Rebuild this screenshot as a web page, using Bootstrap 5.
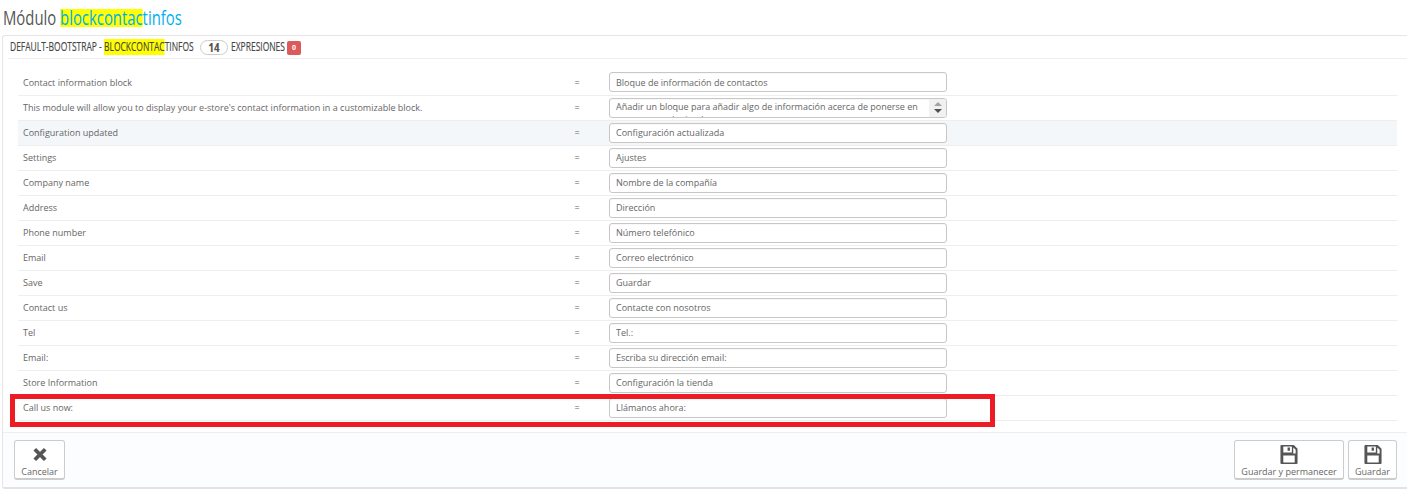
<!DOCTYPE html>
<html lang="es">
<head>
<meta charset="utf-8">
<title>Módulo blockcontactinfos</title>
<link href="https://cdn.jsdelivr.net/npm/bootstrap@5.3.0/dist/css/bootstrap.min.css" rel="stylesheet">
<style>
html,body{background:#fff;}
body{font-family:"Open Sans",sans-serif;font-size:9px;color:#666;overflow:hidden;}
.page-wrap{position:relative;height:497px;padding:0 0 0 2px;}
.mod-title{font-family:"Open Sans",sans-serif;font-size:20px;line-height:18px;color:#555;font-weight:400;margin:0;padding:9px 0 8px 1px;height:35px;white-space:nowrap;}
.squeeze-title{display:inline-block;transform:scaleX(.743);transform-origin:0 50%;}
.mod-title a{color:#00aff0;text-decoration:none;}
.hl{background:#ff0;display:inline-block;}
.tr-panel{border:1px solid #e6e6e6;border-right:0;border-bottom:2px solid #e3e3e5;border-radius:3px 0 0 3px;height:454px;display:flex;flex-direction:column;}
.tr-head{margin:0 0 0 5px;height:23px;border-bottom:1px solid #eee;font-family:"Open Sans",sans-serif;font-size:12px;line-height:16px;color:#444;text-transform:uppercase;display:flex;align-items:center;padding-left:2px;white-space:nowrap;}
.squeeze-head{display:inline-block;transform:scaleX(.706);transform-origin:0 50%;-webkit-text-stroke:.15px #444;}
.head-main{flex:none;width:183px;}
.head-exp{flex:none;width:55px;}
.count-pill{flex:none;border:1px solid #ccc;border-radius:10px;width:28px;height:15px;line-height:13px;text-align:center;font-weight:700;font-stretch:75%;font-size:12px;margin:0 3px 0 7px;background:#fff;color:#555;}
.zero-badge{flex:none;background:#dc5a5a;color:#fff;font-size:7px;font-weight:700;border-radius:2px;width:14px;height:14px;line-height:14px;text-align:center;margin:1px 0 0 1px;}
.tr-body{flex:1;padding:11px 10px 0 15px;}
.tr-table{table-layout:fixed;width:100%;border-collapse:collapse;}
.tr-table td{height:25px;padding:1px 5px 0;border-bottom:1px solid #eee;font-size:9px;color:#666;vertical-align:middle;}
.tr-table td.in-cell{padding-top:0;}
.tr-table tr.alt td{background:#f4f7fa;}
.c-src{width:532px;}
.c-eq{width:54px;padding-left:0!important;padding-right:0!important;text-align:center;}
.tr-in{display:block;width:338px;height:20px;border:1px solid #c7c7c7;border-radius:3px;background:#fff;padding:0 6px;font:9px/18px "Open Sans",sans-serif;color:#666;box-shadow:inset 0 1px 1px rgba(0,0,0,.03);outline:0;}
.ta-wrap{position:relative;width:338px;}
textarea.tr-in{resize:none;overflow:hidden;padding:1px 24px 0 6px;line-height:13px;}
.fake-sb{position:absolute;right:1px;top:1px;bottom:1px;width:17px;background:#f1f1f1;border-radius:0 2px 2px 0;display:flex;flex-direction:column;align-items:center;justify-content:center;gap:3px;}
.fake-sb i{display:block;width:0;height:0;border-left:4px solid transparent;border-right:4px solid transparent;}
.fake-sb i.up{border-bottom:4px solid #a3a3a3;}
.fake-sb i.down{border-top:4px solid #505050;}
.tr-foot{height:55px;background:#fcfdfe;border-top:1px solid #eee;display:flex;justify-content:space-between;padding:7px 10px 0 11px;margin-top:auto;}
.tool-btn{height:40px;background:#fff;border:1px solid #ccc;border-bottom-width:2px;border-radius:3px;font-size:9px;color:#666;padding:0;display:flex;flex-direction:column;align-items:center;line-height:12px;}
.tool-btn svg{display:block;margin-top:4px;margin-bottom:2px;}
.btn-cancel{width:51px;}
.btn-stay{width:110px;}
.btn-save{width:49px;}
.btn-row{display:flex;gap:4px;}
.red-mark{position:absolute;left:10px;top:394px;width:985px;height:33px;border:5px solid #ed1c24;pointer-events:none;}
</style>
</head>
<body>
<div class="page-wrap">
  <h1 class="mod-title"><span class="squeeze-title">Módulo <a href="#"><span class="hl">blockcontac</span>tinfos</a></span></h1>
  <div class="tr-panel">
    <div class="tr-head">
      <span class="head-main"><span class="squeeze-head">default-bootstrap - <span class="hl">blockcontac</span>tinfos</span></span>
      <span class="count-pill">14</span>
      <span class="head-exp"><span class="squeeze-head">expresiones</span></span>
      <span class="zero-badge">0</span>
    </div>
    <div class="tr-body">
      <table class="tr-table">
        <colgroup><col class="c-src"><col class="c-eq"><col></colgroup>
        <tbody>
          <tr><td>Contact information block</td><td class="c-eq">=</td><td class="in-cell"><input class="tr-in" value="Bloque de información de contactos"></td></tr>
          <tr><td>This module will allow you to display your e-store's contact information in a customizable block.</td><td class="c-eq">=</td><td class="in-cell"><div class="ta-wrap"><textarea class="tr-in">Añadir un bloque para añadir algo de información acerca de ponerse en contacto con la tienda.</textarea><div class="fake-sb"><i class="up"></i><i class="down"></i></div></div></td></tr>
          <tr class="alt"><td>Configuration updated</td><td class="c-eq">=</td><td class="in-cell"><input class="tr-in" value="Configuración actualizada"></td></tr>
          <tr><td>Settings</td><td class="c-eq">=</td><td class="in-cell"><input class="tr-in" value="Ajustes"></td></tr>
          <tr><td>Company name</td><td class="c-eq">=</td><td class="in-cell"><input class="tr-in" value="Nombre de la compañía"></td></tr>
          <tr><td>Address</td><td class="c-eq">=</td><td class="in-cell"><input class="tr-in" value="Dirección"></td></tr>
          <tr><td>Phone number</td><td class="c-eq">=</td><td class="in-cell"><input class="tr-in" value="Número telefónico"></td></tr>
          <tr><td>Email</td><td class="c-eq">=</td><td class="in-cell"><input class="tr-in" value="Correo electrónico"></td></tr>
          <tr><td>Save</td><td class="c-eq">=</td><td class="in-cell"><input class="tr-in" value="Guardar"></td></tr>
          <tr><td>Contact us</td><td class="c-eq">=</td><td class="in-cell"><input class="tr-in" value="Contacte con nosotros"></td></tr>
          <tr><td>Tel</td><td class="c-eq">=</td><td class="in-cell"><input class="tr-in" value="Tel.:"></td></tr>
          <tr><td>Email:</td><td class="c-eq">=</td><td class="in-cell"><input class="tr-in" value="Escriba su dirección email:"></td></tr>
          <tr><td>Store Information</td><td class="c-eq">=</td><td class="in-cell"><input class="tr-in" value="Configuración la tienda"></td></tr>
          <tr><td>Call us now:</td><td class="c-eq">=</td><td class="in-cell"><input class="tr-in" value="Llámanos ahora:"></td></tr>
        </tbody>
      </table>
    </div>
    <div class="tr-foot">
      <button type="button" class="tool-btn btn-cancel">
        <svg width="16" height="20" viewBox="0 0 16 20"><path fill="none" stroke="#555" stroke-width="4" d="M2.500 4.500L13.500 15.500M13.500 4.500L2.500 15.500"/></svg>
        Cancelar
      </button>
      <div class="btn-row">
        <button type="button" class="tool-btn btn-stay">
          <svg width="18" height="20" viewBox="0 0 18 20"><path fill="#555" fill-rule="evenodd" d="M1 0H14L18 4V19a1 1 0 0 1-1 1H1a1 1 0 0 1-1-1V1a1 1 0 0 1 1-1zM3 1.500V8H12V1.500zM7.500 2.500H10V6H7.500zM13.500 2.500L16 5V9H13.500zM3 11V18.500H15V11z"/></svg>
          Guardar y permanecer
        </button>
        <button type="button" class="tool-btn btn-save">
          <svg width="18" height="20" viewBox="0 0 18 20"><path fill="#555" fill-rule="evenodd" d="M1 0H14L18 4V19a1 1 0 0 1-1 1H1a1 1 0 0 1-1-1V1a1 1 0 0 1 1-1zM3 1.500V8H12V1.500zM7.500 2.500H10V6H7.500zM13.500 2.500L16 5V9H13.500zM3 11V18.500H15V11z"/></svg>
          Guardar
        </button>
      </div>
    </div>
  </div>
  <div class="red-mark"></div>
</div>
<script src="https://cdn.jsdelivr.net/npm/bootstrap@5.3.0/dist/js/bootstrap.bundle.min.js"></script>
</body>
</html>
